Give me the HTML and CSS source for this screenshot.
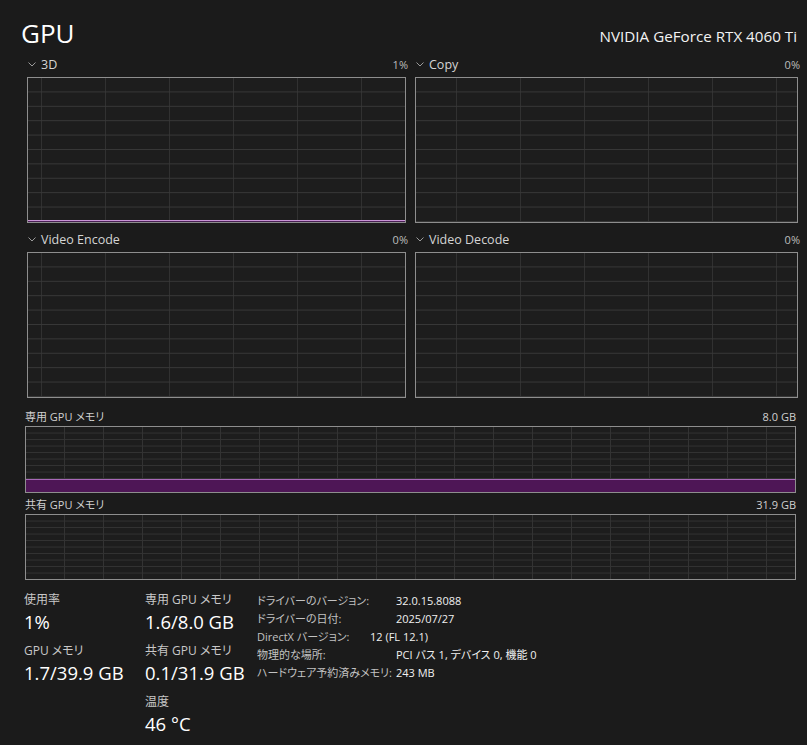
FILE: index.html
```html
<!DOCTYPE html>
<html lang="ja">
<head>
<meta charset="utf-8">
<title>GPU</title>
<link rel="stylesheet" href="styles.css">
</head>
<body>
<div class="app">
  <header class="head">
    <h1 class="title">GPU</h1>
    <div class="model">NVIDIA GeForce RTX 4060 Ti</div>
  </header>

  <section class="engines">
    <div class="engine">
      <div class="engine-head">
        <span class="engine-name"><svg class="chev" width="8" height="5" viewBox="0 0 8 5"><polyline points="0.5,0.5 4,4 7.5,0.5" fill="none" stroke="#9a9a9a" stroke-width="1"/></svg>3D</span>
        <span class="pct">1%</span>
      </div>
      <div class="graph graph-engine"><div class="usage usage-engine" style="height:2px"></div></div>
    </div>
    <div class="engine">
      <div class="engine-head">
        <span class="engine-name"><svg class="chev" width="8" height="5" viewBox="0 0 8 5"><polyline points="0.5,0.5 4,4 7.5,0.5" fill="none" stroke="#9a9a9a" stroke-width="1"/></svg>Copy</span>
        <span class="pct">0%</span>
      </div>
      <div class="graph graph-engine graph-engine-b"></div>
    </div>
    <div class="engine">
      <div class="engine-head">
        <span class="engine-name"><svg class="chev" width="8" height="5" viewBox="0 0 8 5"><polyline points="0.5,0.5 4,4 7.5,0.5" fill="none" stroke="#9a9a9a" stroke-width="1"/></svg>Video Encode</span>
        <span class="pct">0%</span>
      </div>
      <div class="graph graph-engine"></div>
    </div>
    <div class="engine">
      <div class="engine-head">
        <span class="engine-name"><svg class="chev" width="8" height="5" viewBox="0 0 8 5"><polyline points="0.5,0.5 4,4 7.5,0.5" fill="none" stroke="#9a9a9a" stroke-width="1"/></svg>Video Decode</span>
        <span class="pct">0%</span>
      </div>
      <div class="graph graph-engine graph-engine-b"></div>
    </div>
  </section>

  <section class="mem">
    <div class="mem-head"><span>専用 GPU メモリ</span><span>8.0 GB</span></div>
    <div class="graph graph-mem graph-mem-ded"><div class="usage usage-mem" style="height:20%"></div></div>
    <div class="mem-head"><span>共有 GPU メモリ</span><span>31.9 GB</span></div>
    <div class="graph graph-mem graph-mem-sh"></div>
  </section>

  <section class="stats">
    <div class="stat-col stat-col-1">
      <div class="stat"><div class="stat-label">使用率</div><div class="stat-value">1%</div></div>
      <div class="stat"><div class="stat-label">GPU メモリ</div><div class="stat-value">1.7/39.9 GB</div></div>
    </div>
    <div class="stat-col stat-col-2">
      <div class="stat"><div class="stat-label">専用 GPU メモリ</div><div class="stat-value">1.6/8.0 GB</div></div>
      <div class="stat"><div class="stat-label">共有 GPU メモリ</div><div class="stat-value">0.1/31.9 GB</div></div>
      <div class="stat"><div class="stat-label">温度</div><div class="stat-value">46 °C</div></div>
    </div>
    <dl class="props">
      <dt>ドライバーのバージョン:</dt><dd>32.0.15.8088</dd>
      <dt>ドライバーの日付:</dt><dd>2025/07/27</dd>
      <dt>DirectX バージョン:</dt><dd class="dd-shift">12 (FL 12.1)</dd>
      <dt>物理的な場所:</dt><dd>PCI バス 1, デバイス 0, 機能 0</dd>
      <dt>ハードウェア予約済みメモリ:</dt><dd>243 MB</dd>
    </dl>
  </section>
</div>
</body>
</html>
```

FILE: styles.css
```css
* { box-sizing: border-box; }

html, body {
  margin: 0;
  padding: 0;
  background: #1b1b1b;
}

body {
  font-family: "Open Sans", "Noto Sans CJK JP", sans-serif;
  font-feature-settings: "palt";
  color: #ffffff;
  width: 807px;
  height: 745px;
  overflow: hidden;
}

.app {
  padding-top: 12px;
}

.head {
  display: flex;
  justify-content: space-between;
  align-items: center;
  height: 42px;
  padding: 0 10px 0 21px;
}

.title {
  margin: 0;
  font-size: 26px;
  font-weight: 400;
  line-height: 42px;
  color: #ffffff;
}

.model {
  font-size: 15.2px;
  line-height: 42px;
  color: #f2f2f2;
  padding-top: 6px;
}

.engines {
  display: grid;
  grid-template-columns: 379px 383px;
  column-gap: 9px;
  row-gap: 6px;
  padding: 0 10px 0 27px;
}

.engine-head {
  display: flex;
  justify-content: space-between;
  align-items: center;
  height: 20px;
  margin-bottom: 3px;
  font-size: 12.5px;
  color: #d4d4d4;
}

.engine-name {
  display: flex;
  align-items: center;
  gap: 5px;
  padding-left: 1px;
}

.chev {
  display: block;
  margin-top: 1px;
}

.pct {
  font-size: 11px;
  color: #bdbdbd;
  margin-right: -2px;
}

.graph {
  border: 1px solid #8e8e8e;
  background-color: #1d1d1d;
  display: flex;
  flex-direction: column;
  justify-content: flex-end;
}

.graph-engine {
  height: 146px;
  background-image:
    linear-gradient(to bottom, transparent 13.5px, #383838 13.5px, #383838 14.5px),
    linear-gradient(to right, transparent 13px, #313131 13px, #313131 14px, transparent 14px);
  background-size: 100% 14.4px, 64px 100%;
  background-position: 0 0, 0 0;
}

.graph-engine-b {
  background-position: 0 0, 27px 0;
}

.usage-engine {
  border-top: 1px solid #c993d6;
  background: #4a2055;
  margin-top: auto;
}

.mem {
  padding: 10px 11px 0 25px;
}

.mem-head {
  display: flex;
  justify-content: space-between;
  align-items: center;
  height: 16px;
  margin-bottom: 2px;
  font-size: 11px;
  color: #d0d0d0;
}

.mem-head + .graph + .mem-head {
  margin-top: 3px;
}

.graph-mem {
  background-image:
    linear-gradient(to bottom, transparent 5.5px, #333333 5.5px, #333333 6.5px),
    linear-gradient(to right, transparent 38px, #333333 38px, #333333 39px);
  background-size: 100% 6.5px, 39px 100%;
  background-position: 0 0, 0 0;
}

.graph-mem-ded {
  height: 67px;
}

.graph-mem-sh {
  height: 66px;
}

.usage-mem {
  border-top: 1px solid #a868b8;
  background: #4e1656;
}

.stats {
  display: flex;
  padding: 12px 0 0 24px;
}

.stat-col-1 { width: 121px; }
.stat-col-2 { width: 112px; }

.stat {
  margin-bottom: 7px;
}

.stat-label {
  font-size: 12px;
  line-height: 16px;
  color: #c8c8c8;
}

.stat-value {
  font-size: 18.5px;
  line-height: 28px;
  color: #ffffff;
}

.props {
  margin: -1px 0 0 0;
  display: grid;
  grid-template-columns: 139px auto;
  grid-auto-rows: 18px;
  align-items: center;
  font-size: 11px;
}

.props dt {
  color: #c2c2c2;
}

.props dd {
  margin: 0;
  color: #f0f0f0;
}

.props .dd-shift {
  margin-left: -26px;
}
```
